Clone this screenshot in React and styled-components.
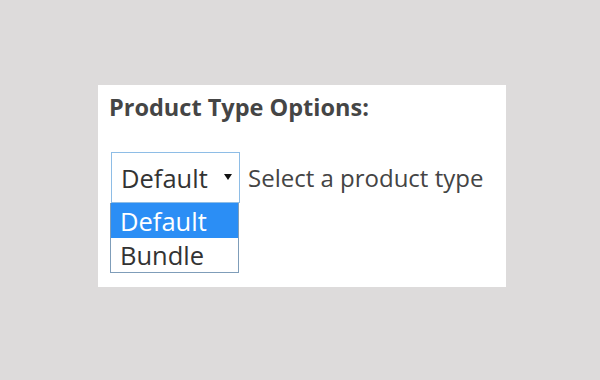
import React from 'react';
import styled, { createGlobalStyle } from 'styled-components';

const GlobalStyle = createGlobalStyle`
  html, body {
    margin: 0;
    padding: 0;
    background: #dddbdb;
  }
`;

const Page = styled.div`
  width: 600px;
  height: 380px;
  box-sizing: border-box;
  padding: 85px 0 0 98px;
  font-family: "Open Sans", "Liberation Sans", sans-serif;
`;

const Panel = styled.section`
  width: 408px;
  height: 202px;
  box-sizing: border-box;
  background: #ffffff;
  padding: 6px 12px 0 11px;
`;

const Title = styled.h3`
  margin: 0;
  font-size: 23.5px;
  font-weight: 700;
  color: #454545;
  line-height: 32px;
`;

const Row = styled.div`
  display: flex;
  align-items: center;
  gap: 8px;
  margin-top: 29px;
  margin-left: 2px;
`;

const SelectWrap = styled.div`
  position: relative;
`;

const SelectBox = styled.div`
  width: 129px;
  height: 51px;
  box-sizing: border-box;
  border: 1px solid #8ebde6;
  display: flex;
  align-items: center;
  justify-content: space-between;
  padding: 0 7px 0 9px;
  font-size: 25.5px;
  color: #333333;
`;

const Arrow = styled.span`
  width: 0;
  height: 0;
  border-left: 4px solid transparent;
  border-right: 4px solid transparent;
  border-top: 6px solid #111111;
  margin-top: -2px;
`;

const List = styled.ul`
  position: absolute;
  top: 51px;
  left: -1px;
  width: 129px;
  margin: 0;
  padding: 0;
  list-style: none;
  box-sizing: border-box;
  border: 1px solid #7f9db9;
  border-top: none;
  background: #ffffff;
`;

const Option = styled.li`
  height: ${(p) => (p.last ? '34px' : '35px')};
  display: flex;
  align-items: center;
  padding-left: 9px;
  font-size: 25.5px;
  color: ${(p) => (p.selected ? '#ffffff' : '#333333')};
  background: ${(p) => (p.selected ? '#2b8ef5' : '#ffffff')};
`;

const Hint = styled.span`
  font-size: 24px;
  color: #444444;
`;

export default function App() {
  return (
    <Page>
      <GlobalStyle />
      <Panel>
        <Title>Product Type Options:</Title>
        <Row>
          <SelectWrap>
            <SelectBox>
              <span>Default</span>
              <Arrow />
            </SelectBox>
            <List>
              <Option selected>Default</Option>
              <Option last>Bundle</Option>
            </List>
          </SelectWrap>
          <Hint>Select a product type</Hint>
        </Row>
      </Panel>
    </Page>
  );
}
